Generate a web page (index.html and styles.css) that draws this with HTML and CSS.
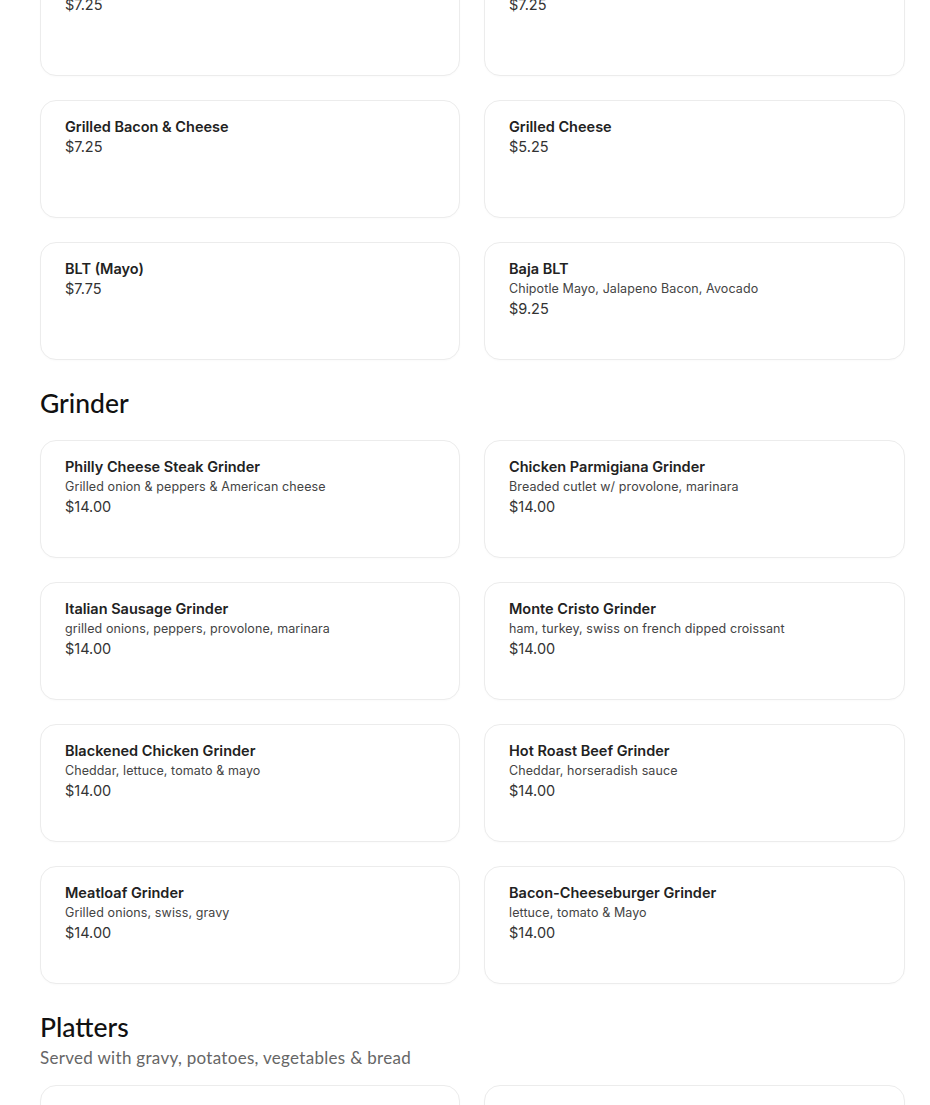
FILE: index.html
```html
<!DOCTYPE html>
<html lang="en">
<head>
<meta charset="utf-8">
<title>Menu</title>
<link rel="stylesheet" href="styles.css">
</head>
<body>
<main class="menu">
  <section class="section section-first">
    <div class="grid">
      <div class="card"><div class="title">Grilled Ham &amp; Cheese</div><div class="price">$7.25</div></div>
      <div class="card"><div class="title">Grilled Turkey &amp; Cheese</div><div class="price">$7.25</div></div>
      <div class="card"><div class="title">Grilled Bacon &amp; Cheese</div><div class="price">$7.25</div></div>
      <div class="card"><div class="title">Grilled Cheese</div><div class="price">$5.25</div></div>
      <div class="card"><div class="title">BLT (Mayo)</div><div class="price">$7.75</div></div>
      <div class="card"><div class="title">Baja BLT</div><div class="desc">Chipotle Mayo, Jalapeno Bacon, Avocado</div><div class="price">$9.25</div></div>
    </div>
  </section>

  <section class="section">
    <h2 class="heading">Grinder</h2>
    <div class="grid">
      <div class="card"><div class="title">Philly Cheese Steak Grinder</div><div class="desc">Grilled onion &amp; peppers &amp; American cheese</div><div class="price">$14.00</div></div>
      <div class="card"><div class="title">Chicken Parmigiana Grinder</div><div class="desc">Breaded cutlet w/ provolone, marinara</div><div class="price">$14.00</div></div>
      <div class="card"><div class="title">Italian Sausage Grinder</div><div class="desc">grilled onions, peppers, provolone, marinara</div><div class="price">$14.00</div></div>
      <div class="card"><div class="title">Monte Cristo Grinder</div><div class="desc">ham, turkey, swiss on french dipped croissant</div><div class="price">$14.00</div></div>
      <div class="card"><div class="title">Blackened Chicken Grinder</div><div class="desc">Cheddar, lettuce, tomato &amp; mayo</div><div class="price">$14.00</div></div>
      <div class="card"><div class="title">Hot Roast Beef Grinder</div><div class="desc">Cheddar, horseradish sauce</div><div class="price">$14.00</div></div>
      <div class="card"><div class="title">Meatloaf Grinder</div><div class="desc">Grilled onions, swiss, gravy</div><div class="price">$14.00</div></div>
      <div class="card"><div class="title">Bacon-Cheeseburger Grinder</div><div class="desc">lettuce, tomato &amp; Mayo</div><div class="price">$14.00</div></div>
    </div>
  </section>

  <section class="section">
    <h2 class="heading">Platters</h2>
    <p class="subheading">Served with gravy, potatoes, vegetables &amp; bread</p>
    <div class="grid">
      <div class="card"><div class="title">Meatloaf Platter</div><div class="price">$16.00</div></div>
      <div class="card"><div class="title">Turkey Platter</div><div class="price">$16.00</div></div>
    </div>
  </section>
</main>
</body>
</html>
```

FILE: styles.css
```css
* { box-sizing: border-box; }

html, body {
  margin: 0;
  padding: 0;
  background: #ffffff;
}

body {
  font-family: "Inter", "Liberation Sans", sans-serif;
  color: #1f1f1f;
  overflow: hidden;
}

.menu {
  width: 865px;
  margin: -42px 0 0 40px;
}

.section + .section {
  margin-top: 24px;
}

.grid {
  display: grid;
  grid-template-columns: 420px 421px;
  column-gap: 24px;
  row-gap: 24px;
}

.card {
  height: 118px;
  border: 1px solid #ececec;
  border-radius: 16px;
  padding: 16px 24px;
  background: #fff;
  box-shadow: 0 1px 2px rgba(0, 0, 0, 0.02);
}

.title {
  font-size: 14.5px;
  line-height: 20px;
  font-weight: 600;
  color: #222;
}

.desc {
  font-size: 12.5px;
  line-height: 20px;
  color: #444;
  letter-spacing: 0.1px;
}

.price {
  font-size: 14.5px;
  line-height: 20px;
  color: #333;
}

.heading {
  font-family: "Lato", "Noto Sans", sans-serif;
  font-weight: 500;
  font-size: 26.5px;
  line-height: 32px;
  color: #111;
  margin: 0 0 21px 0;
  padding-top: 3px;
}

.subheading {
  font-family: "Lato", "Noto Sans", sans-serif;
  font-size: 17px;
  line-height: 22px;
  letter-spacing: 0.3px;
  color: #666;
  margin: -17px 0 16px 0;
}
```
